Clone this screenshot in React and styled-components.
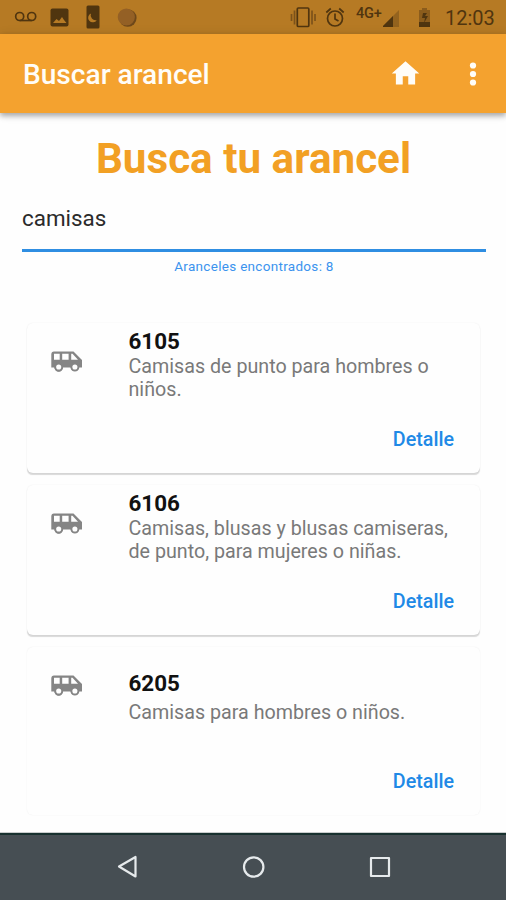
import React from 'react';
import styled, { createGlobalStyle } from 'styled-components';

const GlobalStyle = createGlobalStyle`
  * { box-sizing: border-box; }
  body {
    margin: 0;
    background: #fefefe;
    font-family: Roboto, "Liberation Sans", sans-serif;
  }
`;

const Screen = styled.div`
  width: 506px;
  height: 900px;
  display: flex;
  flex-direction: column;
  overflow: hidden;
  background: #fefefe;
`;

const StatusBar = styled.div`
  flex: none;
  height: 34px;
  display: flex;
  justify-content: space-between;
  background: #b67a24;
  color: #50350f;
`;

const StatusIcons = styled.svg`
  display: block;
  flex: none;
`;

const StatusRight = styled.div`
  display: flex;
  padding-right: 10px;
`;

const Network = styled.span`
  width: 27px;
  padding-top: 6px;
  font-size: 14.5px;
  line-height: 16px;
  font-weight: 500;
  letter-spacing: -0.2px;
  white-space: nowrap;
`;

const Clock = styled.span`
  width: 51px;
  font-size: 20px;
  line-height: 37px;
  white-space: nowrap;
`;

const AppBar = styled.header`
  flex: none;
  height: 79px;
  display: flex;
  align-items: center;
  padding: 0 16px 0 23px;
  background: #f4a22f;
  color: #fffdf8;
  box-shadow: 0 3px 5px rgba(0, 0, 0, 0.28), 0 1px 10px rgba(0, 0, 0, 0.12);
  z-index: 1;
`;

const AppTitle = styled.h1`
  flex: 1;
  margin: 0;
  padding-top: 3px;
  font-size: 28.1px;
  line-height: 34px;
  font-weight: 500;
`;

const BarButton = styled.button`
  display: flex;
  padding: 0;
  border: 0;
  background: none;
  color: inherit;
  margin-left: ${(p) => p.$gap}px;
`;

const Content = styled.main`
  flex: none;
  height: 720px;
  overflow: hidden;
  border-bottom: 1px solid #c9cccd;
`;

const Heading = styled.h2`
  margin: 20px 0 0 1px;
  text-align: center;
  font-size: 42.2px;
  line-height: 52px;
  font-weight: 700;
  color: #f2a024;
`;

const SearchField = styled.div`
  height: 67px;
  margin: 0 20px 0 22px;
  padding-top: 19px;
  border-bottom: 3px solid #2f8ee2;
  font-size: 22.4px;
  line-height: 28px;
  color: #2b2b2b;
`;

const ResultCount = styled.p`
  margin: 5px 0 0 2px;
  text-align: center;
  font-size: 13.5px;
  letter-spacing: 0.3px;
  line-height: 18px;
  color: #3b93ee;
`;

const CardList = styled.div`
  display: flex;
  flex-direction: column;
  gap: 12px;
  margin: 48px 26px 0 27px;
`;

const Card = styled.article`
  height: ${(p) => (p.$short ? 168 : 150)}px;
  display: flex;
  flex-direction: column;
  justify-content: space-between;
  padding: ${(p) => (p.$short ? 23 : 5)}px 26px 19px 24px;
  border-radius: 6px;
  background: #fefefe;
  box-shadow:
    0 0 1.5px rgba(0, 0, 0, 0.08),
    0 ${(p) => (p.$short ? 0 : 2)}px 1px -0.5px rgba(0, 0, 0, ${(p) => (p.$short ? 0 : 0.15)});
`;

const CardBody = styled.div`
  display: flex;
`;

const Leading = styled.div`
  width: 77.5px;
  padding-top: ${(p) => (p.$short ? 5 : 23)}px;
  line-height: 0;
`;

const CardText = styled.div`
  flex: 1;
`;

const Code = styled.h3`
  margin: 0 0 ${(p) => (p.$short ? 6 : 2)}px;
  font-size: 22.4px;
  line-height: 26px;
  font-weight: 700;
  color: #111;
`;

const Description = styled.p`
  margin: 0;
  font-size: 19.7px;
  line-height: 22.5px;
  color: #797979;
  white-space: pre-line;
`;

const DetailButton = styled.button`
  align-self: flex-end;
  padding: 0;
  border: 0;
  background: none;
  font: 500 19.7px/28px Roboto, "Liberation Sans", sans-serif;
  color: #2089e6;
`;

const NavBar = styled.nav`
  flex: none;
  height: 67px;
  display: flex;
  justify-content: space-between;
  align-items: center;
  padding: 0 113px 1px 114px;
  border-top: 2px solid #18312f;
  background: #464e53;
`;

const LeftStatus = () => (
  <StatusIcons width="150" height="34" fill="none" stroke="currentColor" strokeWidth="1.7">
    <circle cx="19.7" cy="16.5" r="4" />
    <circle cx="31.7" cy="16.5" r="4" />
    <path d="M19.7 20.5h12" />
    <rect x="50.5" y="8.5" width="18" height="18" rx="2" fill="currentColor" stroke="none" />
    <path d="M53 23l3.5-4 2.5 2 3-4 2 3 2.5 3z" fill="#b67a24" stroke="none" />
    <rect x="86.5" y="5.5" width="13" height="23" rx="1.5" fill="currentColor" stroke="none" />
    <path d="M91 13.5a4.6 4.6 0 1 0 5.8 6.4a4.8 4.8 0 0 1-5.8-6.4z" fill="#b67a24" stroke="none" />
    <circle cx="127.8" cy="18" r="8.8" fill="#6e481a" stroke="none" />
    <circle cx="126.3" cy="17" r="8.6" fill="#946025" stroke="none" />
  </StatusIcons>
);

const AlertStatus = () => (
  <StatusIcons width="67" height="34" fill="none" stroke="currentColor" strokeWidth="1.7">
    <rect x="8.3" y="8" width="11.5" height="18.5" rx="1" />
    <path d="M5.5 10.5v14M23 10.5v14M2.5 14v7M26 14v7" stroke="#7c521a" />
    <circle cx="46" cy="18.5" r="7.5" />
    <path d="M46 13.5v5.5l3.5 2M37.3 12.5l4.5-4M54.7 12.5l-4.500-4" />
  </StatusIcons>
);

const PowerStatus = () => (
  <StatusIcons width="62" height="34">
    <path d="M16 10v17H-1z" fill="#94631e" />
    <path d="M10 16v11H-1z" fill="currentColor" />
    <path d="M36 10h3V8h5v2h3v17H36z" fill="#8b5c1c" />
    <path d="M36 22h11v5H36z" fill="currentColor" />
    <path d="M44 13h-4l-1 5h3l-1 5 4-7h-3z" fill="currentColor" />
  </StatusIcons>
);

const HomeIcon = () => (
  <svg width="33" height="33" viewBox="0 0 24 24" fill="currentColor">
    <path d="M10 20v-6h4v6h5v-8h3L12 3 2 12h3v8z" />
  </svg>
);

const MoreIcon = () => (
  <svg width="34" height="34" viewBox="0 0 24 24" fill="currentColor">
    <circle cx="12" cy="6" r="2.2" />
    <circle cx="12" cy="12" r="2.2" />
    <circle cx="12" cy="18" r="2.2" />
  </svg>
);

const VanIcon = () => (
  <svg width="32" height="22" viewBox="0 0 32 22">
    <path
      fill="#858585"
      fillRule="evenodd"
      d="M3 0.5H22.5L31 9V16.5H28A4.2 4.2 0 0 1 19.7 16.5H11.9A4.2 4.2 0 0 1 3.5 16.5H0.3V3.5Q0.3 0.5 3 0.5zM3 2.8V8.8H8.7V2.8zM11.2 2.8V8.8H17.6V2.8zM20.2 2.8V8.8H27L21.5 2.8z"
    />
    <circle cx="7.7" cy="16" r="3.5" fill="#fefefe" stroke="#858585" strokeWidth="1.9" />
    <circle cx="23.9" cy="16" r="3.5" fill="#fefefe" stroke="#858585" strokeWidth="1.9" />
  </svg>
);

const NavIcon = ({ children }) => (
  <svg width="26" height="26" fill="none" stroke="#e6eaec" strokeWidth="2.2" strokeLinejoin="round">
    {children}
  </svg>
);

const results = [
  { code: '6105', text: 'Camisas de punto para hombres o\nniños.' },
  { code: '6106', text: 'Camisas, blusas y blusas camiseras,\nde punto, para mujeres o niñas.' },
  { code: '6205', text: 'Camisas para hombres o niños.', short: true },
];

const ResultCard = ({ code, text, short }) => (
  <Card $short={short}>
    <CardBody>
      <Leading $short={short}><VanIcon /></Leading>
      <CardText>
        <Code $short={short}>{code}</Code>
        <Description>{text}</Description>
      </CardText>
    </CardBody>
    <DetailButton>Detalle</DetailButton>
  </Card>
);

export default function App() {
  return (
    <Screen>
      <GlobalStyle />
      <StatusBar>
        <LeftStatus />
        <StatusRight>
          <AlertStatus />
          <Network>4G+</Network>
          <PowerStatus />
          <Clock>12:03</Clock>
        </StatusRight>
      </StatusBar>
      <AppBar>
        <AppTitle>Buscar arancel</AppTitle>
        <BarButton aria-label="Inicio"><HomeIcon /></BarButton>
        <BarButton aria-label="Más opciones" $gap={34}><MoreIcon /></BarButton>
      </AppBar>
      <Content>
        <Heading>Busca tu arancel</Heading>
        <SearchField>camisas</SearchField>
        <ResultCount>Aranceles encontrados: 8</ResultCount>
        <CardList>
          {results.map((r) => <ResultCard key={r.code} {...r} />)}
        </CardList>
      </Content>
      <NavBar>
        <NavIcon><path d="M5 12.5L21.5 3v19.5z" /></NavIcon>
        <NavIcon><circle cx="12.7" cy="13" r="9.7" /></NavIcon>
        <NavIcon><rect x="4" y="4" width="18" height="18" /></NavIcon>
      </NavBar>
    </Screen>
  );
}
